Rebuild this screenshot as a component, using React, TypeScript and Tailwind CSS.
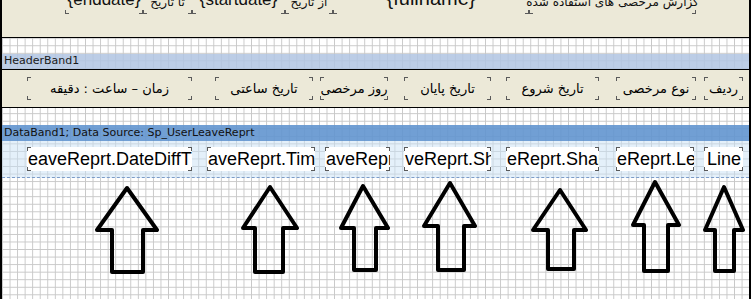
import React from 'react';

const fa = "font-['DejaVu_Sans',sans-serif]";
const en = "font-['Liberation_Sans',Arial,sans-serif]";

// little corner ticks of a report component
function Marks({ top = true }: { top?: boolean }) {
  return (
    <>
      {top && <span className="absolute left-0 top-0 w-[4px] h-[4px] border-l border-t border-[#5a5a5a]" />}
      {top && <span className="absolute right-0 top-0 w-[4px] h-[4px] border-r border-t border-[#5a5a5a]" />}
      <span className="absolute left-0 bottom-0 w-[4px] h-[4px] border-l border-b border-[#5a5a5a]" />
      <span className="absolute right-0 bottom-0 w-[4px] h-[4px] border-r border-b border-[#5a5a5a]" />
    </>
  );
}

const topCells = [
  { cls: 'ml-[63px] w-[78px]', text: '{enddate}', size: 'text-[17px]', font: en },
  { cls: 'w-[49px]', text: 'تا تاریخ', size: 'text-[12px]', font: fa },
  { cls: 'w-[93px]', text: '{startdate}', size: 'text-[17px]', font: en },
  { cls: 'w-[48px]', text: 'از تاریخ', size: 'text-[12px]', font: fa },
  { cls: 'w-[196px]', text: '{fullname}', size: 'text-[20px]', font: en },
  { cls: 'w-[167px]', text: 'گزارش مرخصی های استفاده شده', size: 'text-[12px]', font: fa },
];

const headerCells = [
  { cls: 'ml-[25px] w-[165px]', text: 'زمان – ساعت : دقیقه' },
  { cls: 'ml-[23px] w-[98px]', text: 'تاریخ ساعتی' },
  { cls: 'ml-[7px] w-[68px]', text: 'روز مرخصی' },
  { cls: 'ml-[16px] w-[87px]', text: 'تاریخ پایان' },
  { cls: 'ml-[15px] w-[93px]', text: 'تاریخ شروع' },
  { cls: 'ml-[17px] w-[80px]', text: 'نوع مرخصی' },
  { cls: 'ml-[8px] w-[39px]', text: 'ردیف' },
];

const dataCells = [
  { cls: 'ml-[25px] w-[165px]', text: 'eaveReprt.DateDiffT' },
  { cls: 'ml-[15px] w-[108px]', text: 'aveReprt.Time' },
  { cls: 'ml-[10px] w-[65px]', text: 'aveRepr' },
  { cls: 'ml-[14px] w-[87px]', text: 'veReprt.Sh' },
  { cls: 'ml-[15px] w-[93px]', text: 'eReprt.Shar' },
  { cls: 'ml-[17px] w-[78px]', text: 'eReprt.Le' },
  { cls: 'ml-[10px] w-[39px] justify-center', text: 'Line' },
];

// [tipX, tipY, headL, headR, headY, stemL, stemR, bottom]
const arrows = [
  [127, 188, 97, 157, 230, 112, 143, 272],
  [270, 187, 243, 297, 228, 255, 283, 272],
  [363, 186, 341, 388, 228, 354, 376, 270],
  [450, 183, 424, 475, 226, 438, 464, 270],
  [560, 190, 533, 586, 230, 548, 574, 269],
  [655, 182, 633, 679, 225, 644, 668, 271],
  [724, 187, 705, 743, 230, 715, 734, 271],
];

export default function App() {
  return (
    <div className="w-[752px] h-[299px] bg-white overflow-hidden">
      <div className="relative w-[751px] h-[299px] border-l-2 border-r-2 border-black bg-white bg-[linear-gradient(to_right,#c8c8c8_1px,transparent_1px),linear-gradient(to_bottom,#c8c8c8_1px,transparent_1px)] bg-size-[7.56px_7.56px]">
        {/* page header */}
        <div className="h-[38px] bg-[#ece9d8] border-b border-black overflow-hidden">
          <div className="flex -mt-[20px] h-[34px]">
            {topCells.map((c, i) => (
              <div key={i} className={`relative shrink-0 flex items-end justify-center pb-[6px] ${c.cls}`}>
                <span className={`leading-none whitespace-nowrap text-[#111] ${c.size} ${c.font}`}>{c.text}</span>
                <Marks top={false} />
              </div>
            ))}
          </div>
        </div>

        <div className="h-[16px]" />

        {/* HeaderBand1 title */}
        <div className={`h-[15px] bg-[#b0c4e2]/85 flex items-center pl-[2px] text-[11px] text-[#1a1a1a] ${fa}`}>
          HeaderBand1
        </div>

        {/* header band */}
        <div className="h-[39px] bg-[#ece9d8] border-y border-black flex pt-[7px]">
          {headerCells.map((c, i) => (
            <div
              key={i}
              dir="rtl"
              className={`relative shrink-0 h-[23px] flex items-center justify-center overflow-hidden whitespace-nowrap text-[13px] text-black ${fa} ${c.cls}`}
            >
              {c.text}
              <Marks />
            </div>
          ))}
        </div>

        <div className="h-[17px]" />

        {/* DataBand1 title */}
        <div className={`h-[16px] bg-[#6295cf]/90 flex items-center pl-[2px] text-[11px] text-[#111] ${fa}`}>
          DataBand1; Data Source: Sp_UserLeaveReprt
        </div>

        {/* data band */}
        <div className="h-[37px] bg-[#c9e1f5]/50 border-b border-dashed border-[#7c9cc8] flex pt-[6px]">
          {dataCells.map((c, i) => (
            <div
              key={i}
              className={`relative shrink-0 h-[24px] bg-white flex items-center overflow-hidden whitespace-nowrap text-[18px] text-black ${en} ${c.cls}`}
            >
              <span className="pl-[1px]">{c.text}</span>
              <Marks />
            </div>
          ))}
        </div>

        {/* arrows drawn on top of the designer */}
        <svg className="absolute left-[-2px] top-0 pointer-events-none" width="752" height="299">
          {arrows.map(([tx, ty, hl, hr, hy, sl, sr, by], i) => (
            <polygon
              key={i}
              points={`${tx},${ty} ${hr},${hy} ${sr},${hy} ${sr},${by} ${sl},${by} ${sl},${hy} ${hl},${hy}`}
              fill="none"
              stroke="black"
              strokeWidth="4"
              strokeLinejoin="round"
            />
          ))}
        </svg>
      </div>
    </div>
  );
}
